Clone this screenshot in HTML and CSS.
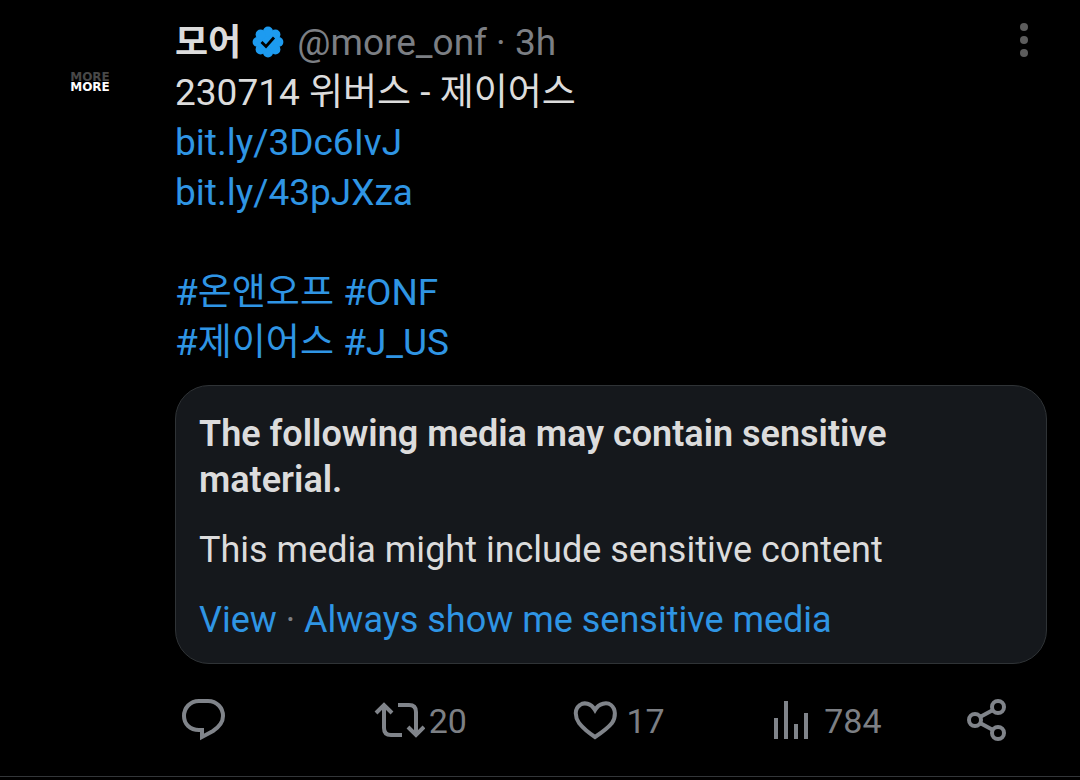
FILE: index.html
```
<!DOCTYPE html>
<html lang="en">
<head>
  <meta charset="UTF-8" />
  <meta name="viewport" content="width=device-width, initial-scale=1" />
  <title>모어 (@more_onf)</title>
  <link rel="stylesheet" href="styles.css">
</head>
<body>
  <article class="tweet">
    <a class="avatar" href="#" aria-label="모어 profile">
      <span class="avatar-ghost" aria-hidden="true">MORE</span>
      <span class="avatar-name">MORE</span>
    </a>

    <div class="content">
      <header class="tweet-header">
        <a class="name" href="#" lang="ko">모어</a>
        <svg class="badge" viewBox="0 0 32 32" role="img" aria-label="Verified">
          <g fill="#1d9bf0">
            <circle cx="16" cy="16" r="12" />
            <circle cx="16" cy="5.6" r="5" />
            <circle cx="23.4" cy="8.6" r="5" />
            <circle cx="26.4" cy="16" r="5" />
            <circle cx="23.4" cy="23.4" r="5" />
            <circle cx="16" cy="26.4" r="5" />
            <circle cx="8.6" cy="23.4" r="5" />
            <circle cx="5.6" cy="16" r="5" />
            <circle cx="8.6" cy="8.6" r="5" />
          </g>
          <path d="M9.5 16 L14 20.5 L22 11.5" fill="none" stroke="#000" stroke-width="2.8" />
        </svg>
        <span class="meta">@more_onf · 3h</span>
        <button class="more" type="button" aria-label="More options">
          <svg viewBox="0 0 10 34" width="10" height="34" fill="#5c5c5c">
            <circle cx="5" cy="4" r="4" />
            <circle cx="5" cy="17" r="4" />
            <circle cx="5" cy="30" r="4" />
          </svg>
        </button>
      </header>

      <div class="text" lang="ko">
        <p>230714 위버스 - 제이어스</p>
        <p><a href="#">bit.ly/3Dc6IvJ</a></p>
        <p><a href="#">bit.ly/43pJXza</a></p>
        <p class="tags"><a href="#">#온앤오프</a> <a href="#">#ONF</a></p>
        <p><a href="#">#제이어스</a> <a href="#">#J_US</a></p>
      </div>

      <section class="warning">
        <h2>The following media may contain sensitive material.</h2>
        <p>This media might include sensitive content</p>
        <p class="warning-links"><a href="#">View</a> · <a href="#">Always show me sensitive media</a></p>
      </section>

      <footer class="actions">
        <button type="button" aria-label="Reply">
          <svg class="icon" viewBox="0 0 52 48">
            <path d="M24 5 h9 C42 5 48 12 48 20 C48 27 44 31 38 35 L27 41 V34 H24 C15 34 9 28 9 20 C9 12 15 5 24 5 Z" />
          </svg>
        </button>
        <button type="button" aria-label="Repost">
          <svg class="icon" viewBox="0 0 52 48">
            <path d="M3 17 L11 9 L19 17 M11 9 V32 Q11 39 18 39 H29 M25 9 H36 Q43 9 43 16 V39 M35 31 L43 39 L51 31" />
          </svg>
          <span>20</span>
        </button>
        <button type="button" aria-label="Like">
          <svg class="icon" viewBox="0 0 52 48">
            <path d="M24 14 C20 7 13 6 9 9 C3 13 4 21 8 27 C12 32 18 37 24 41 C30 37 37 32 41 27 C45 21 45 13 40 9 C36 6 28 7 24 14 Z" />
          </svg>
          <span>17</span>
        </button>
        <button type="button" aria-label="Views">
          <svg class="icon" viewBox="0 0 52 48">
            <path d="M8 22 V43 M18 5 V43 M28 28 V43 M38 17 V43" />
          </svg>
          <span>784</span>
        </button>
        <button type="button" aria-label="Share">
          <svg class="icon icon-share" viewBox="0 0 42 48">
            <circle cx="9" cy="24" r="6" />
            <circle cx="32" cy="11" r="6" />
            <circle cx="32" cy="37" r="6" />
            <path d="M14 21 L27 14 M14 27 L27 34" />
          </svg>
        </button>
      </footer>
    </div>
  </article>
</body>
</html>
```
FILE: styles.css
```
* {
  box-sizing: border-box;
}
body {
  margin: 0;
  background: #000;
  color: #dcdcdc;
  font-family: Roboto, "Noto Sans CJK KR", sans-serif;
  font-size: 37px;
  line-height: 50px;
}
a {
  color: #2f95e4;
  text-decoration: none;
}
p, h2 {
  margin: 0;
}
button {
  padding: 0;
  border: none;
  background: none;
  color: inherit;
  font: inherit;
  cursor: pointer;
}
.tweet {
  display: grid;
  grid-template-columns: 130px 1fr;
  column-gap: 20px;
  padding: 18px 33px 30px 25px;
  border-bottom: 1px solid #333639;
}
.avatar {
  display: flex;
  flex-direction: column;
  align-items: center;
  justify-content: center;
  height: 128px;
  border-radius: 50%;
  font-family: "DejaVu Sans", sans-serif;
  font-size: 12px;
  font-weight: 700;
  line-height: 10px;
}
.avatar-name {
  color: #fff;
}
.avatar-ghost {
  color: #484848;
}
.tweet-header {
  display: flex;
  align-items: center;
  height: 50px;
}
.name {
  color: #dcdcdc;
  font-size: 36px;
  font-weight: 700;
}
.badge {
  width: 32px;
  height: 32px;
  margin: 0 13px 2px 11px;
}
.meta {
  color: #7c7f84;
}
.more {
  display: flex;
  margin-left: auto;
  padding: 0 18px 6px;
}
.tags {
  margin-top: 50px;
}
.warning {
  margin-top: 17px;
  padding: 25px 23px 20px;
  border: 1px solid #2f3336;
  border-radius: 34px;
  background: #15181c;
  font-size: 36px;
  line-height: 46px;
}
.warning h2 {
  font-size: 36px;
  font-weight: 600;
}
.warning p {
  margin-top: 24px;
}
.warning-links {
  color: #7c7f84;
}
.actions {
  display: grid;
  grid-template-columns: repeat(4, 1fr) auto;
  margin-top: 30px;
  padding-right: 39px;
  color: #7c7f84;
  font-size: 34px;
}
.actions button {
  display: flex;
  align-items: center;
  gap: 4px;
}
.actions span {
  padding-top: 2px;
}
.icon {
  width: 52px;
  height: 48px;
  fill: none;
  stroke: #80848a;
  stroke-width: 4;
}
.icon-share {
  width: 42px;
}
```
